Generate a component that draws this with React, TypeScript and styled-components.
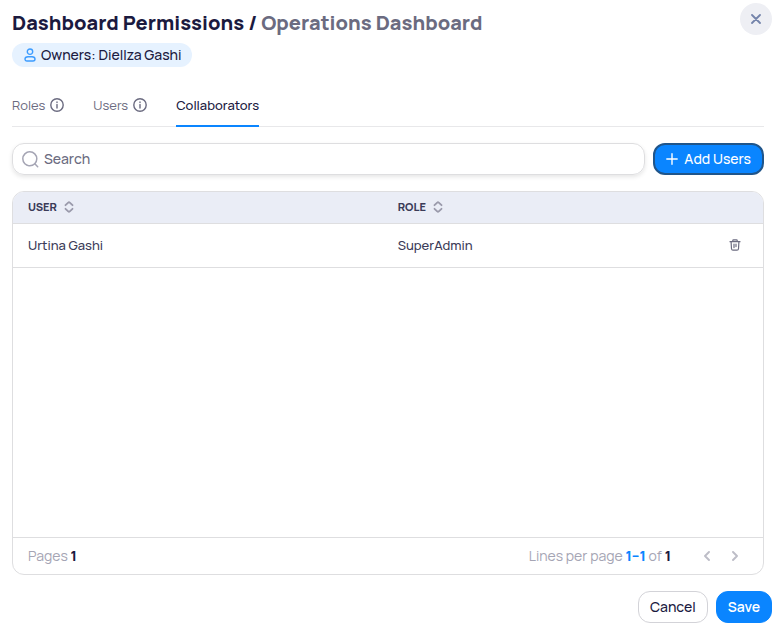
import React, { useState } from "react";
import styled, { createGlobalStyle } from "styled-components";

const color = {
  ink: "#1b1a3f",
  text: "#3b3b58",
  muted: "#6b6b80",
  faint: "#a5a5b4",
  line: "#dedee0",
  blue: "#0a85ff",
};

const GlobalStyle = createGlobalStyle`
  * { box-sizing: border-box; }
  body { margin: 0; background: #fff; }
  body, button, input { font-family: Manrope, Inter, "Liberation Sans", sans-serif; }
  button { margin: 0; padding: 0; border: 0; background: none; cursor: pointer; }
  svg { display: block; flex: none; fill: none; stroke: currentColor; stroke-linecap: round; stroke-linejoin: round; }
`;

const Dialog = styled.main`
  display: flex;
  flex-direction: column;
  min-height: 100vh;
  padding: 3px 9px 7px 12px;
  color: ${color.ink};
`;

const Header = styled.header`
  display: flex;
  align-items: flex-start;
  justify-content: space-between;
`;

const Title = styled.h1`
  margin: 0;
  padding-top: 7px;
  font-size: 20px;
  line-height: 26px;
  font-weight: 800;
  white-space: nowrap;
`;

const TitleContext = styled.span`
  color: ${color.muted};
`;

const CloseButton = styled.button`
  display: grid;
  place-items: center;
  width: 32px;
  height: 32px;
  border-radius: 50%;
  background: #eeeff4;
  color: #7484ab;
`;

const OwnerBadge = styled.div`
  display: flex;
  align-items: center;
  align-self: flex-start;
  gap: 5px;
  height: 24px;
  margin-top: 7px;
  padding: 0 10px 0 12px;
  border-radius: 12px;
  background: #e6f2ff;
  font-size: 14px;
  font-weight: 500;
  line-height: 24px;
  white-space: nowrap;

  svg { color: #3c9cff; }
`;

const Content = styled.div`
  display: flex;
  flex: 1;
  flex-direction: column;
  gap: 16px;
  margin-right: 8px;
`;

const TabList = styled.div`
  display: flex;
  gap: 29px;
  margin-top: 17px;
  border-bottom: 1px solid #e8e8ea;
`;

const Tab = styled.button<{ $active: boolean }>`
  display: flex;
  align-items: center;
  gap: 5px;
  height: 43px;
  margin-bottom: -1px;
  border-bottom: 2px solid ${(p) => (p.$active ? color.blue : "transparent")};
  color: ${(p) => (p.$active ? color.ink : color.muted)};
  font-size: 13px;
  font-weight: ${(p) => (p.$active ? 500 : 400)};
  white-space: nowrap;
`;

const Toolbar = styled.div`
  display: flex;
  gap: 8px;
`;

const SearchField = styled.label`
  display: flex;
  flex: 1;
  align-items: center;
  gap: 5px;
  height: 32px;
  padding: 0 9px;
  border: 1px solid ${color.line};
  border-radius: 12px;
  box-shadow: 0 2px 4px rgba(0, 0, 0, 0.1);
  color: ${color.faint};
`;

const SearchInput = styled.input`
  flex: 1;
  min-width: 0;
  padding: 0 0 1px;
  border: 0;
  outline: 0;
  background: none;
  color: ${color.ink};
  font-size: 14px;
  font-weight: 500;

  &::placeholder { color: ${color.muted}; opacity: 1; }
`;

const Button = styled.button<{ $kind: "outlined" | "filled" | "focused" }>`
  display: flex;
  align-items: center;
  justify-content: center;
  gap: 6px;
  height: 32px;
  padding: 0 11px 1px;
  border: ${(p) => (p.$kind === "focused" ? "2px solid #20558a" : p.$kind === "filled" ? `1px solid ${color.blue}` : "1px solid #d3d3d8")};
  border-radius: 12px;
  background: ${(p) => (p.$kind === "outlined" ? "#fff" : color.blue)};
  color: ${(p) => (p.$kind === "outlined" ? color.ink : "#fff")};
  font-size: 14px;
  font-weight: ${(p) => (p.$kind === "filled" ? 600 : 500)};
  white-space: nowrap;
`;

const Panel = styled.section`
  display: flex;
  flex: 1;
  flex-direction: column;
  overflow: hidden;
  border: 1px solid ${color.line};
  border-radius: 12px;
`;

const Table = styled.table`
  width: 100%;
  border-collapse: separate;
  border-spacing: 0;
  table-layout: fixed;
  text-align: left;
`;

const HeadCell = styled.th<{ $width?: string }>`
  width: ${(p) => p.$width ?? "auto"};
  height: 32px;
  padding: 0 15px 2px;
  border-bottom: 1px solid ${color.line};
  background: #eaedf6;
`;

const SortButton = styled.button`
  display: flex;
  align-items: center;
  gap: 7px;
  color: ${color.text};
  font-size: 11px;
  font-weight: 800;

  svg { color: #9a9aab; }
`;

const Cell = styled.td`
  height: 44px;
  padding: 0 15px 1px;
  border-bottom: 1px solid ${color.line};
  color: ${color.text};
  font-size: 13px;
  font-weight: 500;
`;

const IconButton = styled.button`
  display: grid;
  place-items: center;
  width: 28px;
  height: 28px;
  color: ${color.muted};
`;

const PanelFooter = styled.footer`
  display: flex;
  align-items: center;
  justify-content: space-between;
  height: 37px;
  margin-top: auto;
  padding: 0 14px 1px 15px;
  border-top: 1px solid ${color.line};
  color: ${color.faint};
  font-size: 14px;
  white-space: nowrap;
`;

const Strong = styled.strong`
  color: ${color.ink};
  font-weight: 800;
`;

const Range = styled(Strong)`
  color: ${color.blue};
`;

const Pager = styled.div`
  display: flex;
  align-items: center;

  span { margin-right: 22px; }
  button { color: #bdbdc7; }
`;

const Actions = styled.div`
  display: flex;
  justify-content: flex-end;
  gap: 8px;
  margin-top: 16px;
`;

const InfoIcon = () => (
  <svg width="14" height="14" viewBox="0 0 14 14" strokeWidth="1.4" aria-hidden="true">
    <circle cx="7" cy="7" r="6.2" />
    <path d="M7 6.5v3.6M7 3.9v.5" />
  </svg>
);

const SortIcon = () => (
  <svg width="10" height="12" viewBox="0 0 10 12" strokeWidth="1.8" aria-hidden="true">
    <path d="M1.5 4.2 4.2 1.6c.5-.5 1.1-.5 1.6 0l2.7 2.6M1.5 7.8l2.7 2.6c.5.5 1.1.5 1.6 0l2.7-2.6" />
  </svg>
);

const PersonIcon = () => (
  <svg width="12" height="14" viewBox="0 0 12 14" strokeWidth="1.4" aria-hidden="true">
    <circle cx="6" cy="3.7" r="2.7" />
    <path d="M4 8.7h4c1.8 0 3 .9 3 2.4 0 1.2-.7 1.9-2 1.9H3c-1.3 0-2-.7-2-1.9 0-1.5 1.2-2.4 3-2.4Z" />
  </svg>
);

const SearchIcon = () => (
  <svg width="17" height="17" viewBox="0 0 17 17" strokeWidth="1.5" aria-hidden="true">
    <circle cx="7.8" cy="7.8" r="7" />
    <path d="m12.8 12.8 2.9 2.9" />
  </svg>
);

const PlusIcon = () => (
  <svg width="12" height="12" viewBox="0 0 12 12" strokeWidth="1.4" aria-hidden="true">
    <path d="M6 .8v10.4M.8 6h10.4" />
  </svg>
);

const CloseIcon = () => (
  <svg width="10" height="10" viewBox="0 0 10 10" strokeWidth="1.8" aria-hidden="true">
    <path d="m1 1 8 8M9 1 1 9" />
  </svg>
);

const TrashIcon = () => (
  <svg width="12" height="12" viewBox="0 0 12 12" strokeWidth="1.2" aria-hidden="true">
    <path d="M1 2.7h10M3.8 2.5V1.6c0-.5.3-.8.8-.8h2.8c.5 0 .8.3.8.8v.9M2.1 3l.4 6.8c.1.9.6 1.4 1.5 1.4h4c.9 0 1.4-.5 1.5-1.4L9.9 3M5 5.2v3.4M7 5.2v2.4" />
  </svg>
);

const ChevronIcon = ({ next = false }: { next?: boolean }) => (
  <svg width="6" height="10" viewBox="0 0 6 10" strokeWidth="1.9" aria-hidden="true">
    <path d={next ? "m1 1 4 4-4 4" : "M5 1 1 5l4 4"} />
  </svg>
);

const tabs = [
  { name: "Roles", info: true },
  { name: "Users", info: true },
  { name: "Collaborators", info: false },
];

const collaborators = [{ user: "Urtina Gashi", role: "SuperAdmin" }];

export default function App() {
  const [active, setActive] = useState("Collaborators");
  const [query, setQuery] = useState("");

  return (
    <>
      <GlobalStyle />
      <Dialog>
        <Header>
          <Title>
            Dashboard Permissions / <TitleContext>Operations Dashboard</TitleContext>
          </Title>
          <CloseButton type="button" aria-label="Close">
            <CloseIcon />
          </CloseButton>
        </Header>
        <OwnerBadge>
          <PersonIcon />
          Owners: Diellza Gashi
        </OwnerBadge>
        <Content>
          <TabList role="tablist">
            {tabs.map((tab) => (
              <Tab
                key={tab.name}
                type="button"
                role="tab"
                aria-selected={active === tab.name}
                $active={active === tab.name}
                onClick={() => setActive(tab.name)}
              >
                {tab.name}
                {tab.info && <InfoIcon />}
              </Tab>
            ))}
          </TabList>
          <Toolbar>
            <SearchField>
              <SearchIcon />
              <SearchInput
                type="text"
                aria-label="Search"
                placeholder="Search"
                value={query}
                onChange={(e) => setQuery(e.target.value)}
              />
            </SearchField>
            <Button type="button" $kind="focused">
              <PlusIcon />
              Add Users
            </Button>
          </Toolbar>
          <Panel>
            <Table>
              <thead>
                <tr>
                  <HeadCell $width="49.3%" scope="col">
                    <SortButton type="button">USER <SortIcon /></SortButton>
                  </HeadCell>
                  <HeadCell scope="col">
                    <SortButton type="button">ROLE <SortIcon /></SortButton>
                  </HeadCell>
                  <HeadCell $width="57px" scope="col" aria-label="Actions" />
                </tr>
              </thead>
              <tbody>
                {collaborators.map((row) => (
                  <tr key={row.user}>
                    <Cell>{row.user}</Cell>
                    <Cell>{row.role}</Cell>
                    <Cell>
                      <IconButton type="button" aria-label={`Remove ${row.user}`}>
                        <TrashIcon />
                      </IconButton>
                    </Cell>
                  </tr>
                ))}
              </tbody>
            </Table>
            <PanelFooter>
              <div>Pages <Strong>1</Strong></div>
              <Pager>
                <span>Lines per page <Range>1–1</Range> of <Strong>1</Strong></span>
                <IconButton type="button" aria-label="Previous page"><ChevronIcon /></IconButton>
                <IconButton type="button" aria-label="Next page"><ChevronIcon next /></IconButton>
              </Pager>
            </PanelFooter>
          </Panel>
        </Content>
        <Actions>
          <Button type="button" $kind="outlined">Cancel</Button>
          <Button type="button" $kind="filled">Save</Button>
        </Actions>
      </Dialog>
    </>
  );
}
